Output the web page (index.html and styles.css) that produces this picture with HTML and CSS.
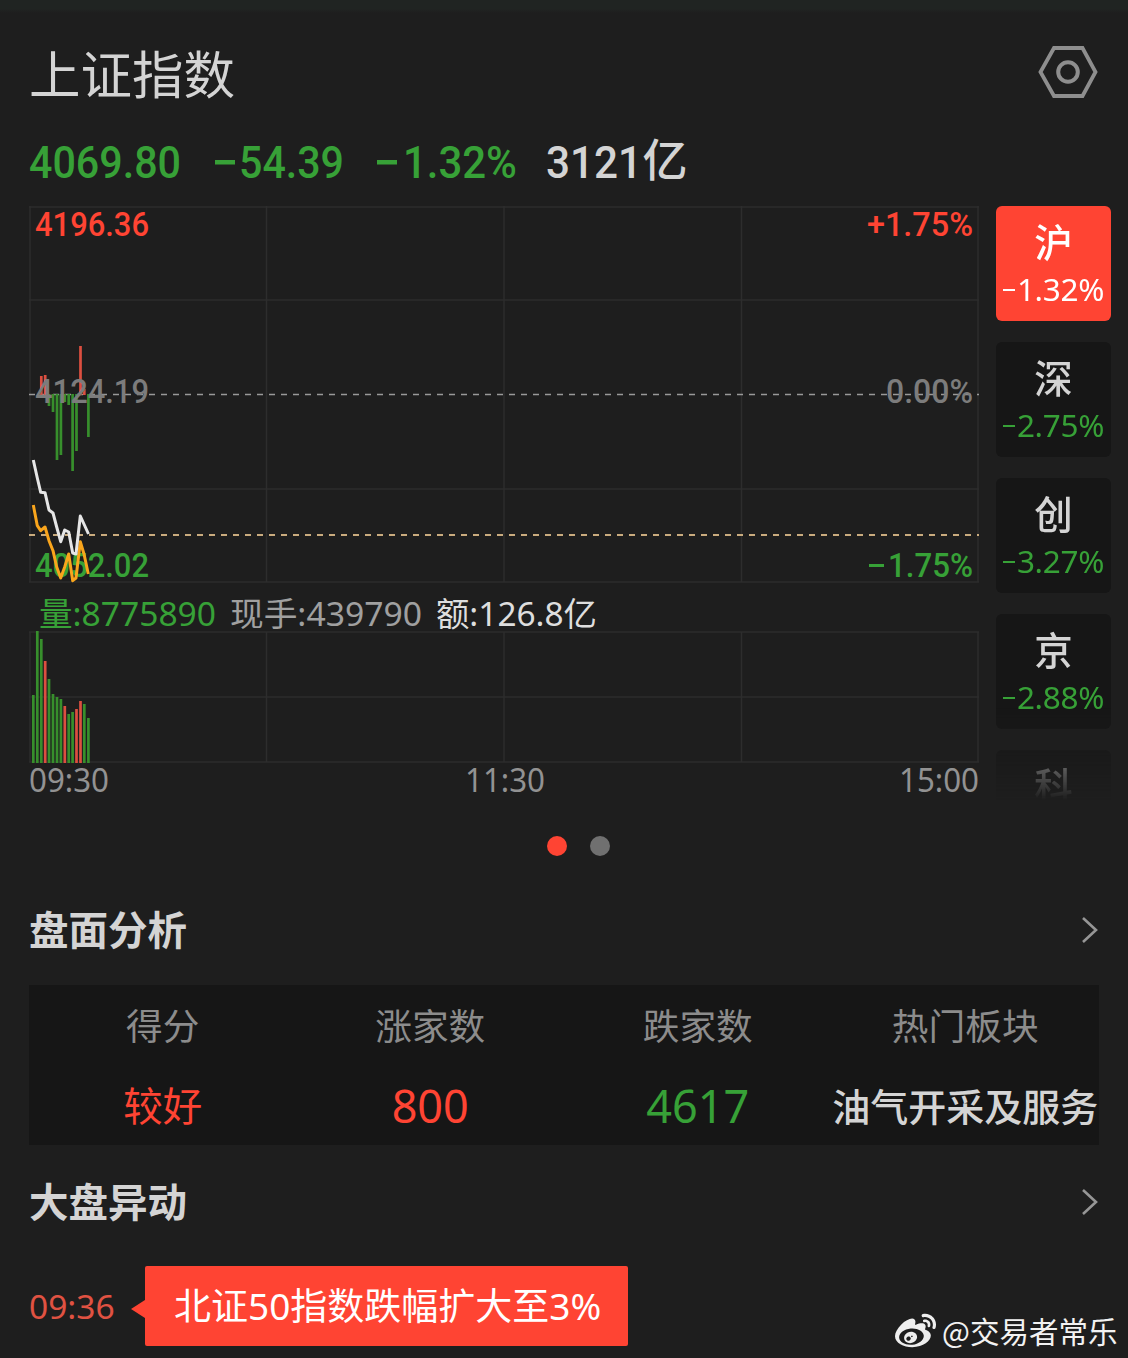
FILE: index.html
```html
<!DOCTYPE html>
<html lang="zh-CN">
<head>
<meta charset="utf-8">
<title>上证指数</title>
<link rel="stylesheet" href="styles.css">
</head>
<body>
<main class="page">
  <header class="header">
    <h1 class="title">上证指数</h1>
    <svg class="settings" width="60" height="54" viewBox="0 0 60 54" fill="none" stroke="#8e8e8e">
      <path d="M16 3H44.500L57.500 27L44.500 51H16L2.500 27Z" stroke-width="3.800"/>
      <circle cx="30" cy="27" r="9.800" stroke-width="4"/>
    </svg>
  </header>

  <svg class="quote" width="670" height="60" viewBox="0 0 670 60">
    <text class="down" x="0" y="45" textLength="152" lengthAdjust="spacingAndGlyphs">4069.80</text>
    <rect class="down" x="186" y="27" width="20" height="4.500"/>
    <text class="down" x="210" y="45" textLength="105" lengthAdjust="spacingAndGlyphs">54.39</text>
    <rect class="down" x="348" y="27" width="20" height="4.500"/>
    <text class="down" x="374" y="45" textLength="114" lengthAdjust="spacingAndGlyphs">1.32%</text>
    <text class="light" x="517" y="45" textLength="96" lengthAdjust="spacingAndGlyphs">3121</text>
    <text class="light unit" x="613.500" y="44">亿</text>
  </svg>

  <section class="market">
    <svg class="chart" width="950" height="594" viewBox="29 206 950 594">
      <g class="grid">
        <path d="M29 207H979M29 300H979M29 489H979M29 582H979M30 206V582M266.500 206V582M504 206V582M741.500 206V582M978 206V582"/>
        <path d="M29 632H979M29 697H979M29 762H979M30 632V762M266.500 632V762M504 632V762M741.500 632V762M978 632V762"/>
      </g>
      <path class="base-line" d="M29 394.500H979"/>
      <path class="last-line" d="M29 535H979"/>
      <path class="bar-up" d="M41.300 376V395M45.200 375V395M80.500 346V395M84.300 389V395"/>
      <path class="bar-down" d="M49 394V406M53 394V412M57 394V460M60.900 394V455M64.800 394V402M68.700 394V405M72.600 394V471M76.500 394V451M88.400 394V437"/>
      <g class="axis-text">
        <text class="up" x="35" y="236" textLength="114" lengthAdjust="spacingAndGlyphs">4196.36</text>
        <text class="up" x="867" y="236" textLength="106" lengthAdjust="spacingAndGlyphs">+1.75%</text>
        <text class="flat" x="35" y="403" textLength="114" lengthAdjust="spacingAndGlyphs">4124.19</text>
        <text class="flat" x="886" y="403" textLength="87" lengthAdjust="spacingAndGlyphs">0.00%</text>
        <text class="down" x="35" y="577" textLength="114" lengthAdjust="spacingAndGlyphs">4052.02</text>
        <rect class="down" x="869" y="564" width="15" height="3"/>
        <text class="down" x="888" y="577" textLength="85" lengthAdjust="spacingAndGlyphs">1.75%</text>
      </g>
      <polyline class="average" points="33.300,505 37.300,525.700 40.700,530.700 45,527 49,540.700 53,550.700 56.700,567 60.700,578 64.700,567 68.700,554 72.700,580.700 76,578 80.300,541.700 84,554 88.300,574"/>
      <polyline class="price" points="33.300,460 37.300,478 40.700,492.300 45,492.700 49,510 53,513 56.700,527 60.700,541.700 64.700,530 68.700,532 72.700,553 76,554 80.300,516 88.500,534"/>
      <g class="legend">
        <text class="down" x="39" y="626" textLength="177" lengthAdjust="spacingAndGlyphs">量:8775890</text>
        <text class="muted" x="230" y="626" textLength="192" lengthAdjust="spacingAndGlyphs">现手:439790</text>
        <text class="bright" x="436" y="626" textLength="161" lengthAdjust="spacingAndGlyphs">额:126.8亿</text>
      </g>
      <path class="bar-down" d="M33.300 695V763M37.300 631V763M41.300 639V763M49 679V763M53 694V763M57 697V763M60.900 699V763M68.700 714V763M72.600 712V763M84.300 704V763M88.400 718V763"/>
      <path class="bar-up" d="M45.200 661V763M64.800 706V763M76.500 709V763M80.500 701V763"/>
      <g class="times">
        <text x="29" y="792" textLength="80" lengthAdjust="spacingAndGlyphs">09:30</text>
        <text x="465" y="792" textLength="80" lengthAdjust="spacingAndGlyphs">11:30</text>
        <text x="899" y="792" textLength="80" lengthAdjust="spacingAndGlyphs">15:00</text>
      </g>
    </svg>
    <nav class="tabs">
      <div class="tab active"><b>沪</b><span><i></i>1.32%</span></div>
      <div class="tab"><b>深</b><span><i></i>2.75%</span></div>
      <div class="tab"><b>创</b><span><i></i>3.27%</span></div>
      <div class="tab"><b>京</b><span><i></i>2.88%</span></div>
      <div class="tab"><b>科</b></div>
    </nav>
  </section>

  <div class="pager"><span class="dot on"></span><span class="dot"></span></div>

  <section>
    <div class="section-head">
      <h2>盘面分析</h2>
      <svg width="18" height="28" viewBox="0 0 18 28"><path class="chevron" d="M2 2L15 14L2 26"/></svg>
    </div>
    <div class="stats">
      <div class="stat"><span class="label">得分</span><span class="value up">较好</span></div>
      <div class="stat"><span class="label">涨家数</span><span class="value number up">800</span></div>
      <div class="stat"><span class="label">跌家数</span><span class="value number down">4617</span></div>
      <div class="stat"><span class="label">热门板块</span><span class="value sector">油气开采及服务</span></div>
    </div>
  </section>

  <section>
    <div class="section-head moves-head">
      <h2>大盘异动</h2>
      <svg width="18" height="28" viewBox="0 0 18 28"><path class="chevron" d="M2 2L15 14L2 26"/></svg>
    </div>
    <div class="move">
      <time>09:36</time>
      <span class="arrow"></span>
      <div class="bubble">北证50指数跌幅扩大至3%</div>
    </div>
  </section>

  <div class="watermark">
    <svg width="41" height="41" viewBox="0 0 24 24" fill="#eee"><path d="M10.098 20.323c-3.977.391-7.414-1.406-7.672-4.020-.259-2.609 2.759-5.047 6.740-5.441 3.979-.394 7.413 1.404 7.671 4.018.259 2.600-2.759 5.049-6.737 5.439l-.002.004zM9.050 17.219c-.384.616-1.208.884-1.829.602-.612-.279-.793-.991-.406-1.593.379-.595 1.176-.861 1.793-.601.622.263.820.972.442 1.592zm1.270-1.627c-.141.237-.449.353-.689.253-.236-.090-.313-.361-.177-.586.138-.227.436-.346.672-.240.239.090.315.360.180.601l.014-.028zm.176-2.719c-1.893-.493-4.033.450-4.857 2.118-.836 1.704-.026 3.591 1.886 4.210 1.983.640 4.318-.341 5.132-2.179.800-1.793-.201-3.642-2.161-4.149zm7.563-1.224c-.346-.105-.570-.180-.405-.615.375-.977.420-1.804 0-2.404-.781-1.112-2.915-1.053-5.364-.030 0 0-.766.331-.571-.271.376-1.217.315-2.224-.270-2.809-1.338-1.337-4.869.045-7.888 3.080C1.309 10.870 0 13.273 0 15.348c0 3.981 5.099 6.395 10.086 6.395 6.536 0 10.888-3.801 10.888-6.820 0-1.822-1.547-2.854-2.915-3.284v.010zm1.908-5.092c-.766-.856-1.908-1.187-2.960-.962-.436.090-.706.511-.616.932.090.420.511.691.932.602.511-.105 1.067.044 1.442.465.376.421.466.977.316 1.473-.136.406.089.856.510.992.405.119.857-.105.992-.512.330-1.021.120-2.178-.646-3.035l.030.045zm2.418-2.195c-1.576-1.757-3.905-2.419-6.054-1.968-.496.104-.812.587-.706 1.081.104.496.586.813 1.082.707 1.532-.331 3.185.150 4.296 1.383 1.112 1.246 1.429 2.943.947 4.416-.165.480.106 1.007.586 1.157.479.165.991-.104 1.157-.586.675-2.088.241-4.478-1.338-6.235l.030.045z"/></svg>
    <span>@交易者常乐</span>
  </div>
</main>
</body>
</html>
```
FILE: styles.css
```css
* { box-sizing: border-box; }
body {
  margin: 0;
  background: #1e1e1e;
  color: #d4d4d4;
  font-family: "Noto Sans", "Noto Sans CJK SC", sans-serif;
}
.page {
  position: relative;
  height: 1358px;
  padding: 26px 29px 0;
  overflow: hidden;
  background: linear-gradient(#202422 0, #202422 9px, #1e1e1e 13px);
}
h1, h2 { margin: 0; }

.up { color: #ff4433; fill: #ff4433; }
.down { color: #37a137; fill: #37a137; }
.light { fill: #d4d4d4; }
.flat { fill: #7c7c7c; }
.muted { fill: #a0a0a0; }
.bright { fill: #dedede; }

.header { display: flex; justify-content: space-between; height: 97px; }
.title { font-size: 51.500px; font-weight: 400; line-height: 97px; }
.settings { margin: 18.500px 1.500px 0 0; }

.quote { display: block; margin-top: 10px; overflow: visible; font: 500 45px Roboto, sans-serif; }
.unit { font: 500 45px "Noto Sans CJK SC", sans-serif; }

.market { display: flex; gap: 17px; margin: 13px -12px 0 0; height: 594px; }
.chart { flex: none; font-size: 32px; overflow: visible; }
.chart path, .chart polyline { fill: none; }
.grid { stroke: #2d2d2d; stroke-width: 1.500; }
.base-line { stroke: #999; stroke-width: 1.500; stroke-dasharray: 6 6; }
.last-line { stroke: #c9ab7e; stroke-width: 2; stroke-dasharray: 6 6; }
.bar-up { stroke: #dc4f40; stroke-width: 2.700; }
.bar-down { stroke: #378f2c; stroke-width: 2.700; }
.price { stroke: #e6e6e6; stroke-width: 3; stroke-linejoin: round; }
.average { stroke: #f9a51c; stroke-width: 3; stroke-linejoin: round; }
.axis-text { font: 500 33px Roboto, sans-serif; }
.legend { font-size: 33px; }
.times { font-size: 32.500px; fill: #929292; }

.tabs {
  display: flex;
  flex-direction: column;
  gap: 21px;
  width: 115px;
  overflow: hidden;
  -webkit-mask-image: linear-gradient(#000 500px, transparent 594px);
  mask-image: linear-gradient(#000 500px, transparent 594px);
}
.tab {
  flex: none;
  display: flex;
  flex-direction: column;
  align-items: center;
  height: 115px;
  padding-top: 11px;
  border-radius: 6px;
  background: #161616;
}
.tab b { font-size: 38.500px; font-weight: 500; line-height: 50px; }
.tab span { display: flex; align-items: center; font-size: 31.500px; line-height: 44px; letter-spacing: -.300px; color: #37a137; }
.tab i { width: 12px; height: 2.500px; margin: 2px 2px 0 0; background: currentColor; }
.tab.active { background: #ff4433; }
.tab.active b, .tab.active span { color: #fff; }

.pager { display: flex; gap: 23px; margin: 36px 0 0 517.500px; }
.dot { width: 20px; height: 20px; border-radius: 50%; background: #707070; }
.dot.on { background: #ff4433; }

.section-head { display: flex; justify-content: space-between; align-items: center; height: 60px; margin-top: 44px; }
h2 { font-size: 39.500px; line-height: 60px; font-weight: 700; }
.section-head svg { margin-top: -1px; }
.chevron { fill: none; stroke: #969696; stroke-width: 2.600; }
.stats { display: grid; grid-template-columns: repeat(4, 1fr); width: 1070px; height: 160px; margin-top: 25px; background: #161616; }
.stat { display: flex; flex-direction: column; align-items: center; padding-top: 11px; white-space: nowrap; }
.label { font-size: 36.700px; line-height: 60px; color: #8c8c8c; }
.value { font-size: 39.500px; line-height: 60px; margin-top: 20px; }
.number { font-size: 45px; }
.sector { font-size: 38px; font-weight: 500; }

.moves-head { margin-top: 27px; }
.move { display: flex; align-items: center; height: 80px; margin-top: 34px; }
time { width: 102px; font-size: 33.500px; color: #e05242; }
.arrow { border: 9px solid transparent; border-width: 9px 14px 9px 0; border-right-color: #ff4433; margin-top: 6px; }
.bubble { width: 483px; height: 80px; padding-left: 29px; border-radius: 2px; background: #ff4433; color: #fff; font-size: 37px; line-height: 80px; white-space: nowrap; }

.watermark { position: absolute; left: 895px; top: 1309px; display: flex; align-items: center; gap: 6px; color: #f2f2f2; font-family: "Noto Sans CJK SC", sans-serif; font-size: 29.500px; line-height: 42px; white-space: nowrap; }
```
